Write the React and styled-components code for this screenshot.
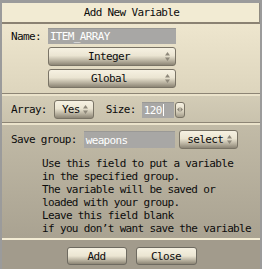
import React from 'react'
import styled, { createGlobalStyle } from 'styled-components'

const Global = createGlobalStyle`
  html, body {
    margin: 0;
    padding: 0;
    background: #9b9b9b;
  }
  body {
    font-family: "DejaVu Sans Mono", "Liberation Mono", monospace;
    font-size: 11px;
    letter-spacing: -0.65px;
    color: #0c0c0c;
  }
`

function Arrows() {
  return (
    <svg width="5" height="9" viewBox="0 0 5 9">
      <path d="M2.5 0 L5 3.5 L0 3.5 Z M2.5 9 L5 5.5 L0 5.5 Z" fill="#8e887a" />
    </svg>
  )
}

function App() {
  return (
    <>
      <Global />
      <Window>
        <Dialog>
          <TitleBar>Add New Variable</TitleBar>

          <Section tone="top">
            <Row>
              <Label>Name:</Label>
              <Input width={128} height={16} gapLeft={3}>ITEM_ARRAY</Input>
            </Row>
            <Row indent={48}>
              <Select width={128} height={19}>
                <SelectText>Integer</SelectText>
                <Arrows />
              </Select>
            </Row>
            <Row indent={48}>
              <Select width={128} height={19}>
                <SelectText>Global</SelectText>
                <Arrows />
              </Select>
            </Row>
          </Section>

          <Divider />

          <Section tone="mid">
            <Row>
              <Label>Array:</Label>
              <Select width={40} height={19} gapLeft={3}>
                <SelectText>Yes</SelectText>
                <Arrows />
              </Select>
              <Label gapLeft={12}>Size:</Label>
              <Input width={32} height={16} gapLeft={2}>
                120<Caret />
              </Input>
              <Spin>
                <svg width="6" height="7" viewBox="0 0 6 7">
                  <path d="M0 3.5 L2.5 1 L2.5 6 Z M6 3.5 L3.5 1 L3.5 6 Z" fill="#8e887a" />
                </svg>
              </Spin>
            </Row>
          </Section>

          <Divider />

          <Section tone="low">
            <Row>
              <Label>Save group:</Label>
              <Input width={91} height={17} gapLeft={3}>weapons</Input>
              <Select width={59} height={19} gapLeft={4}>
                <SelectText>select</SelectText>
                <Arrows />
              </Select>
            </Row>
            <Help>
              <div>Use this field to put a variable</div>
              <div>in the specified group.</div>
              <div>The variable will be saved or</div>
              <div>loaded with your group.</div>
              <div>Leave this field blank</div>
              <div>if you don’t want save the variable</div>
            </Help>
          </Section>

          <LightDivider />

          <Footer>
            <Button width={60}>Add</Button>
            <Button width={61}>Close</Button>
          </Footer>
        </Dialog>
      </Window>
    </>
  )
}

export default App

const Window = styled.div`
  width: 262px;
  height: 269px;
  padding: 3px 2px 0 2px;
  box-sizing: border-box;
  background: #9b9b9b;
`

const Dialog = styled.div`
  display: flex;
  flex-direction: column;
  height: 266px;
  background: #a29b8c;
`

const TitleBar = styled.div`
  height: 19px;
  display: flex;
  align-items: center;
  justify-content: center;
  background: #f2ebd3;
  border-right: 1px solid #8f8a80;
  border-bottom: 2px solid #8b8273;
  padding-left: 2px;
`

const tones = {
  top: 'linear-gradient(#eee6ce, #ddd5bd)',
  mid: 'linear-gradient(#d3ccb6, #c9c2ad)',
  low: 'linear-gradient(#c2bba7, #a9a291)',
}

const pads = {
  top: '4px 0 5px 0',
  mid: '4px 0 3px 0',
  low: '5px 0 3px 0',
}

const Section = styled.div`
  display: flex;
  flex-direction: column;
  gap: 3px;
  padding: ${p => pads[p.tone]};
  background: ${p => tones[p.tone]};
`

const Row = styled.div`
  display: flex;
  align-items: center;
  padding-left: ${p => (p.indent ? p.indent - 2 : 9)}px;
`

const Label = styled.span`
  margin-left: ${p => p.gapLeft || 0}px;
  margin-right: 4px;
`

const Input = styled.div`
  width: ${p => p.width}px;
  height: ${p => p.height}px;
  margin-left: ${p => p.gapLeft || 0}px;
  box-sizing: border-box;
  display: flex;
  align-items: center;
  padding-left: 2px;
  background: #a8a7a5;
  border-top: 1px solid #9a9996;
  color: #fff;
`

const Caret = styled.span`
  display: inline-block;
  width: 1px;
  height: 12px;
  margin-left: 1px;
  background: #fff;
`

const Select = styled.div`
  width: ${p => p.width}px;
  height: ${p => p.height}px;
  margin-left: ${p => p.gapLeft || 0}px;
  box-sizing: border-box;
  display: flex;
  align-items: center;
  padding: 0 5px 0 4px;
  border: 1px solid #7a7466;
  border-radius: 3px;
  background: linear-gradient(#f6f1e2 0%, #ebe5d2 45%, #b9b2a0 75%, #8c8575 100%);
`

const SelectText = styled.span`
  flex: 1;
  text-align: center;
`

const Spin = styled.div`
  width: 10px;
  height: 16px;
  box-sizing: border-box;
  margin-left: 1px;
  display: flex;
  align-items: center;
  justify-content: center;
  border: 1px solid #7a7466;
  border-radius: 3px;
  background: linear-gradient(#f6f1e2 0%, #e3dcc8 50%, #a39c8a 100%);
`

const Help = styled.div`
  margin-top: 5px;
  padding-left: 40px;
  line-height: 13px;
`

const Divider = styled.div`
  height: 3px;
  background: linear-gradient(#8d8575 0 1px, #ebe3cb 1px 3px);
`

const LightDivider = styled.div`
  height: 2px;
  background: #f3ecd4;
`

const Footer = styled.div`
  flex: 1;
  display: flex;
  justify-content: center;
  align-items: flex-start;
  gap: 9px;
  padding-top: 7px;
  padding-left: 1px;
`

const Button = styled.div`
  width: ${p => p.width}px;
  height: 18px;
  box-sizing: border-box;
  display: flex;
  align-items: center;
  justify-content: center;
  border: 1px solid #6e6a60;
  border-radius: 3px;
  background: linear-gradient(#f6f1e2 0%, #ebe5d2 50%, #b2ab99 80%, #8c8575 100%);
`
